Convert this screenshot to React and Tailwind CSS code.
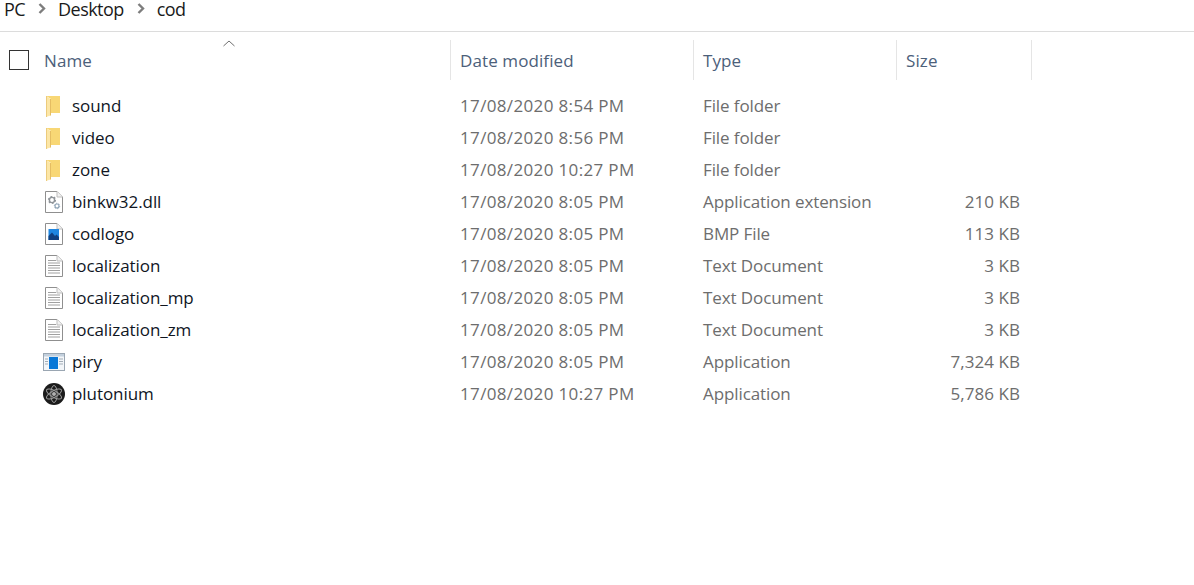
const FONT = "font-['Open_Sans','Noto_Sans',sans-serif]"

const FILES = [
  { name: 'sound', date: '17/08/2020 8:54 PM', type: 'File folder', size: '', icon: 'folder' },
  { name: 'video', date: '17/08/2020 8:56 PM', type: 'File folder', size: '', icon: 'folder' },
  { name: 'zone', date: '17/08/2020 10:27 PM', type: 'File folder', size: '', icon: 'folder' },
  { name: 'binkw32.dll', date: '17/08/2020 8:05 PM', type: 'Application extension', size: '210 KB', icon: 'dll' },
  { name: 'codlogo', date: '17/08/2020 8:05 PM', type: 'BMP File', size: '113 KB', icon: 'bmp' },
  { name: 'localization', date: '17/08/2020 8:05 PM', type: 'Text Document', size: '3 KB', icon: 'text' },
  { name: 'localization_mp', date: '17/08/2020 8:05 PM', type: 'Text Document', size: '3 KB', icon: 'text' },
  { name: 'localization_zm', date: '17/08/2020 8:05 PM', type: 'Text Document', size: '3 KB', icon: 'text' },
  { name: 'piry', date: '17/08/2020 8:05 PM', type: 'Application', size: '7,324 KB', icon: 'app' },
  { name: 'plutonium', date: '17/08/2020 10:27 PM', type: 'Application', size: '5,786 KB', icon: 'plutonium' },
]

function Page({ children }) {
  return (
    <svg width="18" height="22" viewBox="0 0 18 22" className="block">
      <path d="M0.5 0.5H12L17.5 6V21.5H0.5Z" fill="#fff" stroke="#8f8f8f" />
      <path d="M12 0.5V6H17.5" fill="#f2f2f2" stroke="#bdbdbd" />
      {children}
    </svg>
  )
}

function Gear({ x, y, r, color }) {
  return (
    <g fill="none" stroke={color}>
      <circle cx={x} cy={y} r={r} strokeWidth={r * 0.55} />
      <circle cx={x} cy={y} r={r * 1.35} strokeWidth={r * 0.45} strokeDasharray={`${r * 0.7} ${r * 0.7}`} />
    </g>
  )
}

function FileIcon({ kind }) {
  if (kind === 'folder') {
    return (
      <svg width="16" height="21" viewBox="0 0 16 21" className="block">
        <path d="M0 0H14V17H5V3Z" fill="#f8d775" />
        <path d="M0 0L4.5 3V19.5L0 21Z" fill="#fce6a6" />
        <path d="M4.5 3V19.5" stroke="#e5bd62" />
        <path d="M0.5 0V21" stroke="#eccb7c" />
      </svg>
    )
  }
  if (kind === 'dll') {
    return (
      <Page>
        <Gear x={7} y={9} r={2.6} color="#8f9499" />
        <Gear x={12} y={15} r={2} color="#8ea3b5" />
      </Page>
    )
  }
  if (kind === 'bmp') {
    return (
      <Page>
        <rect x="3.5" y="6" width="10.5" height="11" fill="#1f86e0" />
        <path d="M3.5 17V13L7 9.5L10 13L11.5 11.5L14 14V17Z" fill="#103f7f" />
      </Page>
    )
  }
  if (kind === 'text') {
    return (
      <Page>
        <path d="M3 5.5H11M3 8H15M3 10.5H15M3 13H15M3 15.5H15M3 18H15" stroke="#a0a0a0" />
      </Page>
    )
  }
  if (kind === 'app') {
    return (
      <svg width="22" height="18" viewBox="0 0 22 18" className="block">
        <rect x="0.5" y="0.5" width="21" height="17" fill="#f3f6f9" stroke="#9aa6b2" />
        <rect x="1" y="1" width="20" height="2.5" fill="#c3d0dd" />
        <path d="M2 6H5M2 8.5H5M2 11H5M16 6H20M16 8.5H20M16 11H20" stroke="#a3adb7" />
        <rect x="6" y="4" width="9" height="12" fill="#0a78d7" />
      </svg>
    )
  }
  return (
    <svg width="22" height="22" viewBox="0 0 22 22" className="block">
      <circle cx="11" cy="11" r="11" fill="#1b1b1b" />
      <g fill="none" stroke="#9a9a9a" strokeWidth="1">
        <ellipse cx="11" cy="11" rx="8.5" ry="3.2" transform="rotate(30 11 11)" />
        <ellipse cx="11" cy="11" rx="8.5" ry="3.2" transform="rotate(90 11 11)" />
        <ellipse cx="11" cy="11" rx="8.5" ry="3.2" transform="rotate(150 11 11)" />
      </g>
      <circle cx="11" cy="11" r="2" fill="#b0b0b0" />
    </svg>
  )
}

function Crumb() {
  return (
    <svg width="8" height="11" viewBox="0 0 8 11" className="ml-[13px] mr-3 mt-[3px] shrink-0">
      <path d="M1.5 1L6 5.5L1.5 10" fill="none" stroke="#7d7d7d" strokeWidth="2.4" />
    </svg>
  )
}

function HeaderCell({ label, className }) {
  return (
    <div className={`flex items-center border-r border-[#e5e5e5] pl-[9px] pt-[2px] tracking-[0.1px] text-[#4c607a] ${className}`}>
      {label}
    </div>
  )
}

export default function App() {
  return (
    <div className={`relative h-[585px] w-[1194px] overflow-hidden bg-white text-[17px] ${FONT}`}>
      {/* breadcrumb */}
      <div className="flex h-8 items-start border-b border-[#dcdcdc] pl-1 text-[18px] leading-[19px] tracking-[-0.55px] text-[#1a1a1a]">
        <span>PC</span>
        <Crumb />
        <span>Desktop</span>
        <Crumb />
        <span>cod</span>
      </div>

      {/* column headers */}
      <div className="mt-2 flex h-10">
        <div className="flex w-[451px] items-center border-r border-[#e5e5e5]">
          <div className="ml-[9px] h-5 w-5 border border-[#333]" />
          <span className="ml-[15px] pt-[2px] tracking-[0.1px] text-[#4c607a]">Name</span>
        </div>
        <HeaderCell label="Date modified" className="w-[243px]" />
        <HeaderCell label="Type" className="w-[203px]" />
        <HeaderCell label="Size" className="w-[135px]" />
      </div>

      {/* sort caret */}
      <svg width="12" height="7" viewBox="0 0 12 7" className="absolute left-[223px] top-[40px]">
        <path d="M0.5 6L6 1L11.5 6" fill="none" stroke="#6f6f6f" />
      </svg>

      {/* rows */}
      <div className="mt-[10px]">
        {FILES.map((f) => (
          <div key={f.name} className="flex h-8 items-center text-[#6d6d6d]">
            <div className="flex w-[451px] items-center">
              <div className="ml-[43px] mr-[7px] flex w-[22px] shrink-0 justify-center">
                <FileIcon kind={f.icon} />
              </div>
              <span className="tracking-[-0.07px] text-[#10161f]">{f.name}</span>
            </div>
            <div className="w-[243px] pl-[9px] tracking-[0.35px]">{f.date}</div>
            <div className="w-[203px] pl-[9px] tracking-[-0.1px]">{f.type}</div>
            <div className="w-[123px] text-right tracking-[0.05px]">{f.size}</div>
          </div>
        ))}
      </div>
    </div>
  )
}
